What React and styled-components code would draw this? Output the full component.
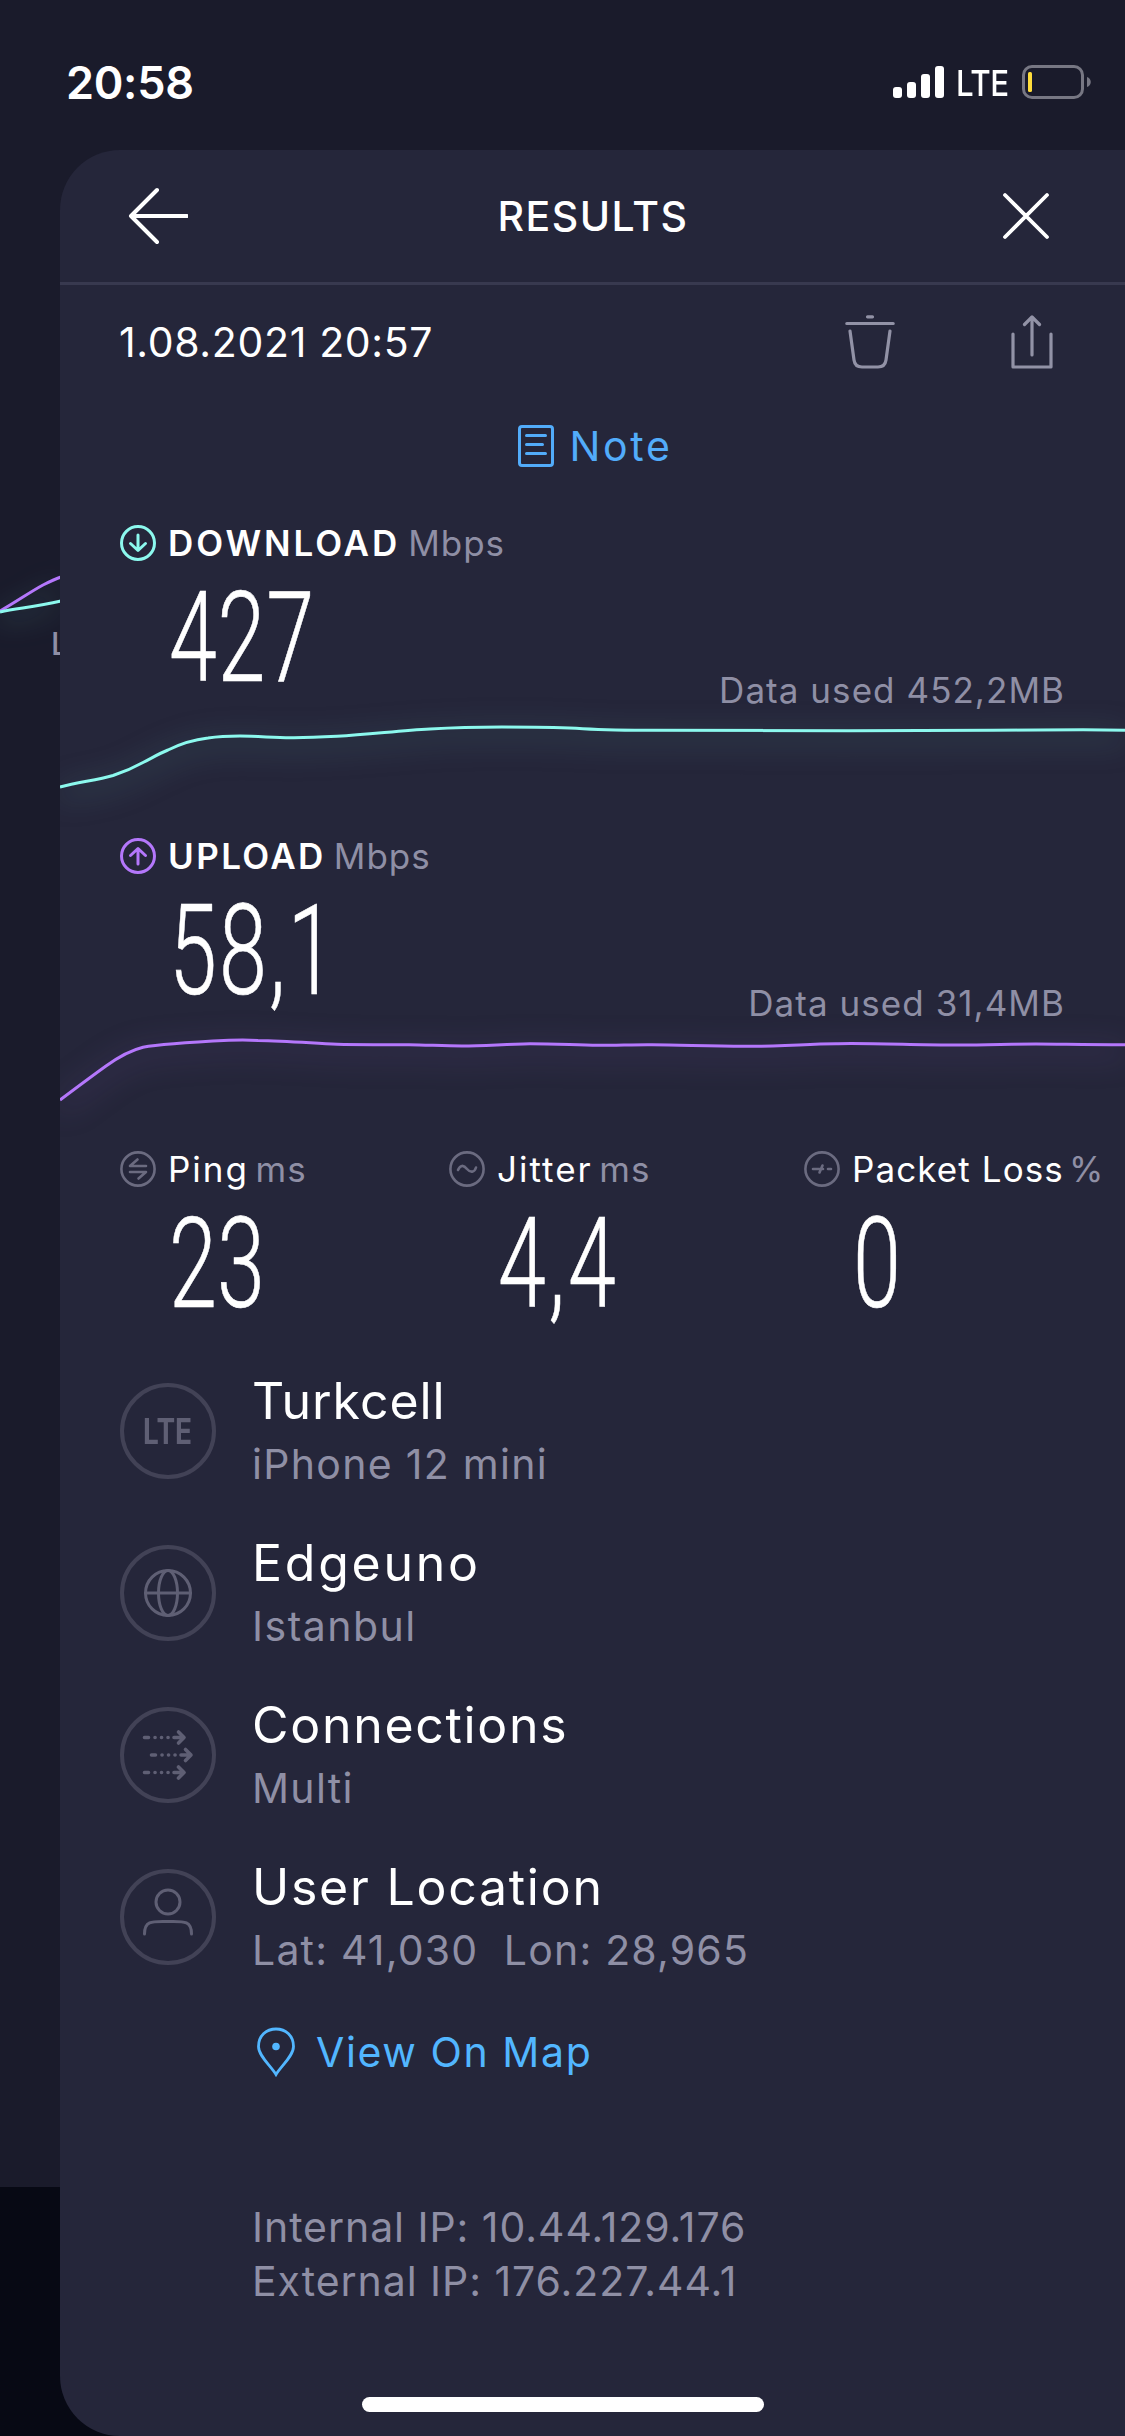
import React from 'react';
import styled, { createGlobalStyle } from 'styled-components';

const info = [
  { icon: 'lte', title: 'Turkcell', detail: 'iPhone 12 mini', titleTrack: 0.95, detailTrack: 1.3 },
  { icon: 'globe', title: 'Edgeuno', detail: 'Istanbul', titleTrack: 2.75, detailTrack: 1.5 },
  { icon: 'multi', title: 'Connections', detail: 'Multi', titleTrack: 1.7, detailTrack: 1.3 },
  {
    icon: 'user',
    title: 'User Location',
    detail: 'Lat: 41,030\u00a0 Lon: 28,965',
    titleTrack: 1.75,
    detailTrack: 1.2,
  },
];

const downloadPath =
  'M0 78C20 73 37 71 53 66.500C64 63 74 58.500 83 53.500C91 49.500 99 44.500 108 41C120 35 131 31 148 29C158 27.500 168 27 180 27C200 27 215 29 234 28.700C250 28.700 264 28 277 27.300C310 25.500 340 21.500 370 20C395 18.500 420 18 442 18C480 18 500 18.500 516 19.300C532 20.500 550 21.300 585 21.300L789 21.700L933 21.300L1023 20.700L1065 21.300';

const uploadPath =
  'M0 78C16 66 32 54 46 44C60 34 72 28 83 25.300C100 22 135 20 169 18.300C180 18 190 18 198 18.500C225 19 250 21 277 22.300C300 23 325 22.500 349 22.700C368 23 385 24 402 24C425 24 445 22 470 21.700C495 21.700 515 23 538 23.300C558 23.300 575 22.500 592 22.700C625 23 655 24.500 689 24.300C725 24.500 750 21.500 778 21.700C805 21 850 22.700 890 23C920 23.300 950 22 976 22C1000 22 1020 22.700 1065 22.700';

function ArrowBadge({ color, up }) {
  return (
    <svg width="36" height="36" viewBox="0 0 36 36" fill="none" stroke={color} strokeWidth="3">
      <circle cx="18" cy="18" r="16.500" />
      <path
        d={up ? 'M18 26V11M10.500 17.500L18 10.500L25.500 17.500' : 'M18 10V25M10.500 18.500L18 25.500L25.500 18.500'}
        strokeLinecap="round"
        strokeLinejoin="round"
      />
    </svg>
  );
}

const smallIcons = {
  ping: 'M26 15H10L17.500 8.500M10 21H26L18.500 27.500',
  jitter: 'M9 19C11 14 14.500 13.500 18 18C21.500 22 25.500 21.500 27 16.500',
  loss: 'M9 18H15.500M15.500 21.500L18.500 14.500H18.500M18 18H19M24 18H27',
};

function SmallIcon({ name }) {
  return (
    <svg width="36" height="36" viewBox="0 0 36 36" fill="none" stroke="#6b6b80" strokeWidth="2.600">
      <circle cx="18" cy="18" r="16.600" />
      <path d={smallIcons[name]} strokeLinecap="round" strokeLinejoin="round" />
    </svg>
  );
}

function InfoIcon({ name }) {
  if (name === 'lte') return <LteMark>LTE</LteMark>;
  return (
    <svg width="96" height="96" viewBox="0 0 96 96" fill="none" stroke="#5f5f74" strokeWidth="3" strokeLinecap="round">
      {name === 'globe' && (
        <>
          <circle cx="48" cy="48" r="22.500" />
          <ellipse cx="48" cy="48" rx="9.500" ry="22.500" />
          <path d="M25.500 48H70.500" />
        </>
      )}
      {name === 'multi' && (
        <g strokeWidth="3.600" strokeLinejoin="round">
          {[[0, 30.5], [7, 48], [0, 65.5]].map(([x, y]) => (
            <g key={y} transform={`translate(${x} ${y})`}>
              <path d="M24.500 0H28.500M35 0H35.100M41.500 0H41.600M48 0H48.100M54 0H64M58.500 -5.500L64 0L58.500 5.500" />
            </g>
          ))}
        </g>
      )}
      {name === 'user' && (
        <>
          <circle cx="48" cy="33" r="12" />
          <path d="M24.500 65C24.500 51 33 52.500 48 52.500S71.500 51 71.500 65" />
        </>
      )}
    </svg>
  );
}

function SpeedResult({ label, value, used, color, up, path, track, valueTrack }) {
  return (
    <section>
      <LabelRow>
        <ArrowBadge color={color} up={up} />
        <Label $strong $track={track}>{label}</Label>
        <Unit $gap={8} $track={1}>Mbps</Unit>
      </LabelRow>
      <ValueRow>
        <Value $track={valueTrack}>{value}</Value>
        <Used>Data used {used}</Used>
      </ValueRow>
      <Chart viewBox="0 0 1065 97" $glow={color}>
        <path d={path} stroke={color} />
      </Chart>
    </section>
  );
}

function Metric({ icon, label, unit, value, track, valueTrack }) {
  return (
    <div>
      <LabelRow>
        <SmallIcon name={icon} />
        <Label $track={track}>{label}</Label>
        <Unit $gap={unit === '%' ? 5 : 6.5} $track={1}>{unit}</Unit>
      </LabelRow>
      <ValueRow>
        <Value $track={valueTrack}>{value}</Value>
      </ValueRow>
    </div>
  );
}

function App() {
  return (
    <Screen>
      <GlobalStyle />
      <StatusBar>
        <Clock>20:58</Clock>
        <Signal>
          <i />
          <i />
          <i />
          <i />
        </Signal>
        <Carrier>LTE</Carrier>
        <svg width="70" height="34" viewBox="0 0 70 34" fill="none">
          <rect x="1.500" y="1.500" width="59" height="31" rx="8.500" stroke="#777783" strokeWidth="3" />
          <rect x="6" y="7" width="4" height="20" rx="1.500" fill="#ffdd3c" />
          <path d="M65 12C70 13.500 70 20.500 65 22Z" fill="#777783" />
        </svg>
      </StatusBar>
      <Body>
        <Rail>
          <svg width="60" height="80" viewBox="0 0 60 80" fill="none" strokeWidth="3">
            <path d="M0 51C16 42 30 32 43 25C49 22 55 19 61 17" stroke="#b477fb" />
            <path d="M0 52C20 48 35 47 61 41" stroke="#8cf9ee" />
          </svg>
          <RailText>L</RailText>
        </Rail>
        <Panel>
          <Header>
            <svg width="60" height="58" viewBox="0 0 60 58" fill="none" stroke="#fff" strokeWidth="4">
              <path d="M59 29H3M29 3L3 29L29 55" strokeLinecap="round" strokeLinejoin="round" />
            </svg>
            <Title>RESULTS</Title>
            <svg width="48" height="48" viewBox="0 0 48 48" stroke="#fff" strokeWidth="3.800">
              <path d="M3 3L45 45M45 3L3 45" strokeLinecap="round" />
            </svg>
          </Header>
          <Toolbar>
            <Stamp>1.08.2021 20:57</Stamp>
            <svg width="50" height="54" viewBox="0 0 50 54" fill="none" stroke="#9292a6" strokeWidth="3.200">
              <path d="M22.500 1.800H27.500M1.800 8.500H48.200" strokeLinecap="round" />
              <path d="M5 16L9 45Q10 52 17 52H33Q40 52 41 45L45 16" strokeLinecap="round" />
            </svg>
            <svg width="42" height="54" viewBox="0 0 42 54" fill="none" stroke="#9292a6" strokeWidth="3.200">
              <path d="M2 19V52H40V19M21 40V2M13.500 9.500L21 2L28.500 9.500" strokeLinecap="round" strokeLinejoin="round" />
            </svg>
          </Toolbar>
          <NoteRow>
            <svg width="36" height="42" viewBox="0 0 36 42" fill="none" stroke="#52acfa" strokeWidth="3">
              <rect x="1.500" y="1.500" width="33" height="39" rx="2.500" />
              <path d="M8.500 10.500H27.500M8.500 19.500H24.500M8.500 28.500H27.500" strokeLinecap="round" />
            </svg>
            <NoteText>Note</NoteText>
          </NoteRow>
          <SpeedResult
            label="DOWNLOAD"
            value="427"
            used="452,2MB"
            color="#8cf9ee"
            path={downloadPath}
            track={2.9}
            valueTrack={1}
          />
          <SpeedResult
            label="UPLOAD"
            value="58,1"
            used="31,4MB"
            color="#b477fb"
            up
            path={uploadPath}
            track={2.4}
            valueTrack={3}
          />
          <Metrics>
            <Metric icon="ping" label="Ping" unit="ms" value="23" track={2} valueTrack={0} />
            <Metric icon="jitter" label="Jitter" unit="ms" value="4,4" track={2} valueTrack={4} />
            <Metric icon="loss" label="Packet Loss" unit="%" value="0" track={1.1} valueTrack={0} />
          </Metrics>
          <InfoList>
            {info.map((row) => (
              <InfoRow key={row.title}>
                <Ring>
                  <InfoIcon name={row.icon} />
                </Ring>
                <div>
                  <InfoTitle $track={row.titleTrack}>{row.title}</InfoTitle>
                  <InfoDetail $track={row.detailTrack}>{row.detail}</InfoDetail>
                </div>
              </InfoRow>
            ))}
          </InfoList>
          <MapLink>
            <svg width="38" height="50" viewBox="0 0 38 50" fill="none" stroke="#52b6ff" strokeWidth="2.800">
              <path d="M19 47.500C14 39 1.500 29 1.500 19.500C1.500 9 9 2 19 2S36.500 9 36.500 19.500C36.500 29 24 39 19 47.500Z" />
              <circle cx="19" cy="19.500" r="3.800" fill="#52b6ff" stroke="none" />
            </svg>
            <span>View On Map</span>
          </MapLink>
          <Addresses>
            <Address>Internal IP: 10.44.129.176</Address>
            <Address>External IP: 176.227.44.1</Address>
          </Addresses>
        </Panel>
      </Body>
      <HomeIndicator />
    </Screen>
  );
}

const GlobalStyle = createGlobalStyle`
  body {
    margin: 0;
    background: #1a1b2b;
  }
  * {
    box-sizing: border-box;
  }
  svg {
    display: block;
    flex: none;
  }
`;

const Screen = styled.div`
  position: relative;
  width: 1125px;
  height: 2436px;
  overflow: hidden;
  color: #fff;
  background: linear-gradient(#1a1b2b 2187px, #070914 2187px);
  font-family: Inter, 'Liberation Sans', sans-serif;
  font-weight: 400;
  white-space: nowrap;
`;

const StatusBar = styled.div`
  display: flex;
  height: 150px;
  padding: 65px 33px 0 66px;
`;

const Clock = styled.div`
  flex: 1;
  font-size: 45px;
  font-weight: 600;
  line-height: 35px;
  letter-spacing: -0.3px;
`;

const Signal = styled.div`
  display: flex;
  align-items: flex-end;
  gap: 5px;
  height: 33px;
  margin-right: 12px;

  i {
    width: 9px;
    height: 11px;
    border-radius: 3px;
    background: #fff;
  }
  i:nth-child(2) {
    height: 16px;
  }
  i:nth-child(3) {
    height: 24px;
  }
  i:nth-child(4) {
    height: 32px;
  }
`;

const Carrier = styled.div`
  width: 66px;
  font-size: 36px;
  font-weight: 500;
  line-height: 37px;
  letter-spacing: -0.5px;
  transform: scaleX(0.87);
  transform-origin: left;
`;

const Body = styled.div`
  display: flex;
`;

const Rail = styled.div`
  width: 60px;
  height: 2286px;
  padding-top: 410px;
  overflow: hidden;

  svg {
    overflow: visible;
    filter: drop-shadow(0 8px 14px rgba(140, 249, 238, 0.3));
  }
`;

const RailText = styled.div`
  padding-left: 51px;
  color: #8f8fa5;
  font-size: 31px;
  font-weight: 500;
  line-height: 8px;
`;

const Panel = styled.main`
  width: 1065px;
  height: 2286px;
  overflow: hidden;
  border-radius: 60px 0 0 60px;
  background: #25263a;
`;

const Header = styled.header`
  display: flex;
  align-items: center;
  justify-content: space-between;
  height: 135px;
  padding: 0 75px 0 68px;
  border-bottom: 3px solid #38394f;
`;

const Title = styled.h1`
  margin: 0 4px 0 0;
  font-size: 41px;
  font-weight: 500;
  letter-spacing: 1.5px;
`;

const Toolbar = styled.div`
  display: flex;
  align-items: center;
  height: 114px;
  padding: 0 72px 0 59px;

  svg + svg {
    margin-left: 116px;
  }
`;

const Stamp = styled.div`
  flex: 1;
  font-size: 41px;
  letter-spacing: 0.65px;
`;

const NoteRow = styled.div`
  display: flex;
  align-items: center;
  justify-content: center;
  gap: 16px;
  height: 94px;
  padding-left: 5px;
  color: #52acfa;
`;

const NoteText = styled.div`
  font-size: 41px;
  letter-spacing: 2.6px;
`;

const LabelRow = styled.div`
  display: flex;
  align-items: center;
  height: 73px;
  padding: 27px 0 0 60px;
`;

const Label = styled.div`
  margin-left: 12px;
  font-size: 35px;
  font-weight: ${(p) => (p.$strong ? 600 : 400)};
  letter-spacing: ${(p) => p.$track}px;
`;

const Unit = styled.div`
  margin-left: ${(p) => p.$gap}px;
  color: #8f8fa5;
  font-size: 35px;
  letter-spacing: ${(p) => p.$track}px;
`;

const ValueRow = styled.div`
  display: flex;
  align-items: flex-end;
  justify-content: space-between;
  height: 143px;
  padding: 0 60px 0 109px;
`;

const Value = styled.div`
  font-family: Roboto, 'Liberation Sans', sans-serif;
  font-size: 127px;
  font-weight: 300;
  line-height: 143px;
  letter-spacing: ${(p) => p.$track}px;
  -webkit-text-stroke: 0.6px #fff;
  transform: scaleX(0.68);
  transform-origin: left;
`;

const Used = styled.div`
  color: #8f8fa5;
  font-size: 35px;
  line-height: 37px;
  letter-spacing: 1.05px;
`;

const Chart = styled.svg`
  width: 1065px;
  height: 97px;
  overflow: visible;
  fill: none;
  stroke-width: 3;
  filter: drop-shadow(0 7px 15px ${(p) => p.$glow}80);
`;

const Metrics = styled.section`
  display: grid;
  grid-template-columns: 329px 355px 1fr;
`;

const InfoList = styled.section`
  padding: 34px 0 0 60px;
`;

const InfoRow = styled.div`
  display: flex;
  height: 162px;
`;

const Ring = styled.div`
  display: flex;
  align-items: center;
  justify-content: center;
  width: 96px;
  height: 96px;
  margin: 14px 36px 0 0;
  border: 4px solid #424256;
  border-radius: 50%;
`;

const LteMark = styled.div`
  color: #5f5f74;
  font-size: 35px;
  font-weight: 700;
  line-height: 36px;
  transform: scaleX(0.8);
`;

const InfoTitle = styled.div`
  font-size: 50px;
  line-height: 64px;
  letter-spacing: ${(p) => p.$track}px;
`;

const InfoDetail = styled.div`
  color: #8f8fa5;
  font-size: 41px;
  line-height: 62px;
  letter-spacing: ${(p) => p.$track}px;
`;

const MapLink = styled.div`
  display: flex;
  align-items: center;
  gap: 21px;
  height: 70px;
  padding-left: 197px;
  color: #52b6ff;
  font-size: 41px;
  letter-spacing: 1.6px;
`;

const Addresses = styled.div`
  padding: 113px 0 0 192px;
  color: #8f8fa5;
`;

const Address = styled.div`
  font-size: 41px;
  line-height: 54px;
  letter-spacing: 0.95px;
`;

const HomeIndicator = styled.div`
  position: absolute;
  bottom: 24px;
  left: 362px;
  width: 402px;
  height: 15px;
  border-radius: 8px;
  background: #fff;
`;

export default App;
